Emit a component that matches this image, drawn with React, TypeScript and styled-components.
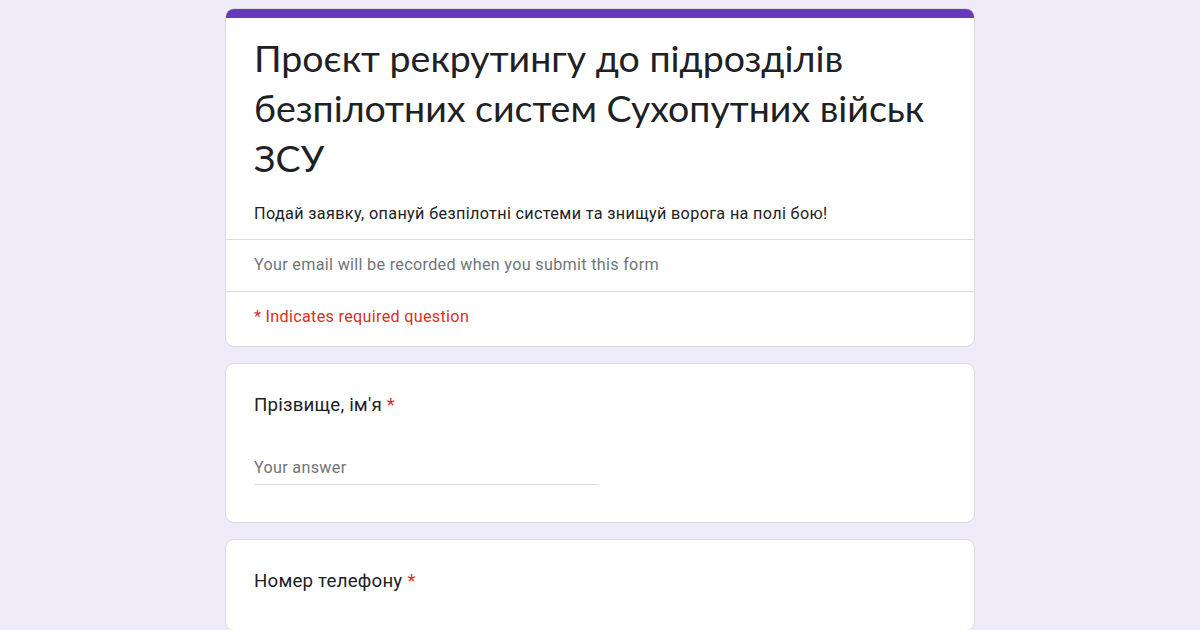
import React from "react";
import styled, { createGlobalStyle } from "styled-components";

const GlobalStyle = createGlobalStyle`
    body {
        margin: 0;
        background-color: #f0ebf8;
        font-family: Roboto, "Liberation Sans", sans-serif;
        color: #202124;
    }
`;

const Page = styled.div`
    display: flex;
    flex-direction: column;
    align-items: center;
    gap: 16px;
    padding-top: 8px;
    height: 622px;
    overflow: hidden;
`;

const Card = styled.div`
    width: 748px;
    background-color: #ffffff;
    border: 1px solid #dadce0;
    border-radius: 9px;
    overflow: hidden;
    flex-shrink: 0;
`;

const AccentBar = styled.div`
    height: 10px;
    margin: -1px -1px 0;
    background-color: #673ab7;
`;

const HeaderBody = styled.div`
    padding: 15px 28px 15px;
`;

const FormTitle = styled.h1`
    margin: 0;
    font-family: Lato, "Open Sans", sans-serif;
    font-size: 37.5px;
    font-weight: 400;
    line-height: 50px;
    color: #202124;
`;

const Description = styled.p`
    margin: 21px 0 0;
    font-size: 16.2px;
    letter-spacing: 0.35px;
    line-height: 20px;
    color: #202124;
`;

const InfoRow = styled.div<{ $danger?: boolean }>`
    border-top: 1px solid #dadce0;
    padding: ${(p) => (p.$danger ? "15px 28px 19px" : "15px 28px 16px")};
    font-size: 16.2px;
    letter-spacing: 0.3px;
    line-height: 20px;
    color: ${(p) => (p.$danger ? "#d93025" : "#70757a")};
`;

const QuestionBody = styled.div`
    padding: 29px 28px 37px;
`;

const QuestionLabel = styled.div`
    font-size: 18.7px;
    letter-spacing: 0.2px;
    line-height: 24px;
    color: #202124;
`;

const Required = styled.span`
    color: #d93025;
    margin-left: 5px;
`;

const AnswerField = styled.div`
    width: 345px;
    margin-top: 41px;
    padding-bottom: 6px;
    border-bottom: 1px solid #dadce0;
    font-size: 16.2px;
    letter-spacing: 0.3px;
    line-height: 20px;
    color: #70757a;
`;

function Question({ label, withAnswer = true }: { label: string; withAnswer?: boolean }) {
    return (
        <Card>
            <QuestionBody>
                <QuestionLabel>
                    {label}
                    <Required>*</Required>
                </QuestionLabel>
                {withAnswer && <AnswerField>Your answer</AnswerField>}
            </QuestionBody>
        </Card>
    );
}

export default function App() {
    return (
        <>
            <GlobalStyle />
            <Page>
                <Card>
                    <AccentBar />
                    <HeaderBody>
                        <FormTitle>
                            Проєкт рекрутингу до підрозділів безпілотних систем Сухопутних військ ЗСУ
                        </FormTitle>
                        <Description>
                            Подай заявку, опануй безпілотні системи та знищуй ворога на полі бою!
                        </Description>
                    </HeaderBody>
                    <InfoRow>Your email will be recorded when you submit this form</InfoRow>
                    <InfoRow $danger>* Indicates required question</InfoRow>
                </Card>
                <Question label="Прізвище, ім'я" />
                <Question label="Номер телефону" withAnswer={false} />
            </Page>
        </>
    );
}
